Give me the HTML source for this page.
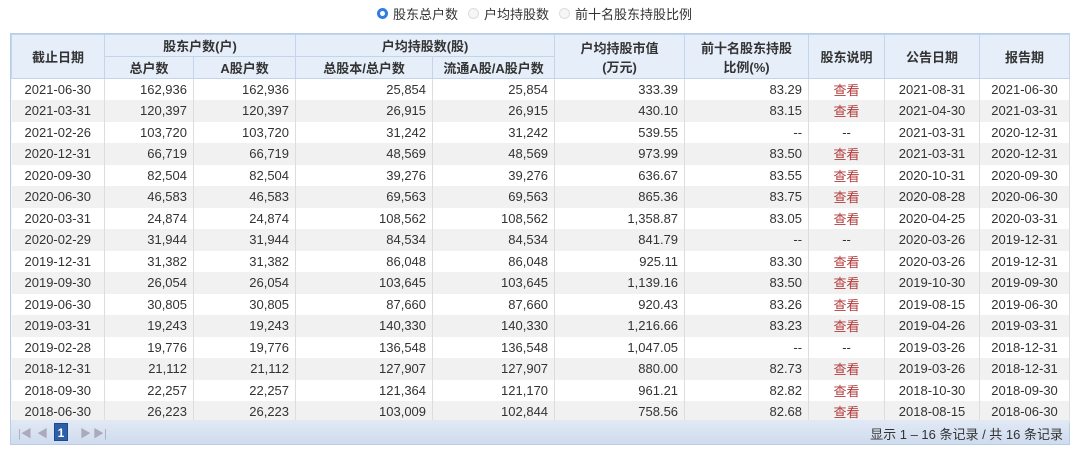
<!DOCTYPE html>
<html><head><meta charset="utf-8"><style>
body{margin:0;width:1080px;height:451px;background:#fff;font-family:"Liberation Sans","Noto Sans CJK SC",sans-serif;color:#333;overflow:hidden;position:relative}
.radios{position:absolute;top:4px;left:377px;font-size:13px;display:flex;gap:0;align-items:center;height:18px}
.r{display:inline-flex;align-items:center;margin-right:10px}
.c{width:11px;height:11px;border-radius:50%;border:1px solid #ddd;background:#f6f6f6;margin-right:5px;box-sizing:border-box}
.c.on{border:3px solid #2f7de1;background:#fff}
.wrap{position:absolute;left:10px;top:33px;width:1060px;height:412px;border:1px solid #b9cde8;box-sizing:border-box;background:#f4f7fb}
table{border-collapse:collapse;table-layout:fixed;width:1058px;font-size:13px}
th{background:#e6eef9;font-weight:bold;border:1px solid #c4d4ea;height:21px;padding:0;color:#333}
td{height:21.5px;padding:0 6px;text-align:right;border-right:1px solid #ddd;white-space:nowrap;box-sizing:border-box}
tr.o td{background:#fff}tr.e td{background:#f1f1f1}
td.ct{text-align:center}
a{color:#b23a3a;text-decoration:none}
.pg{position:absolute;left:0;right:0;bottom:0;height:24px;background:linear-gradient(#e1e9f5,#cfdcee);font-size:13px}
.pg .num{position:absolute;left:43px;top:3px;width:14px;height:18px;background:#2d5fa8;color:#fff;text-align:center;line-height:18px;font-weight:bold;font-size:12px;border:1px solid #1e4a8c;box-sizing:border-box}
.pg .ic{position:absolute;top:5px;color:#aab;font-size:11px}
.pg .t{position:absolute;right:6px;top:4px}
</style></head><body>
<div class="radios"><span class="r"><span class="c on"></span>股东总户数</span><span class="r"><span class="c"></span>户均持股数</span><span class="r"><span class="c"></span>前十名股东持股比例</span></div>
<div class="wrap">
<table>
<colgroup><col style="width:93px"><col style="width:89px"><col style="width:102px"><col style="width:137px"><col style="width:122px"><col style="width:130px"><col style="width:124px"><col style="width:76px"><col style="width:95px"><col style="width:90px"></colgroup>
<tr><th rowspan="2">截止日期</th><th colspan="2">股东户数(户)</th><th colspan="2">户均持股数(股)</th><th rowspan="2">户均持股市值<br>(万元)</th><th rowspan="2">前十名股东持股<br>比例(%)</th><th rowspan="2">股东说明</th><th rowspan="2">公告日期</th><th rowspan="2">报告期</th></tr>
<tr><th>总户数</th><th>A股户数</th><th>总股本/总户数</th><th>流通A股/A股户数</th></tr>
<tr class="o"><td class="ct">2021-06-30</td><td>162,936</td><td>162,936</td><td>25,854</td><td>25,854</td><td>333.39</td><td>83.29</td><td class="ct"><a>查看</a></td><td class="ct">2021-08-31</td><td class="ct">2021-06-30</td></tr>
<tr class="e"><td class="ct">2021-03-31</td><td>120,397</td><td>120,397</td><td>26,915</td><td>26,915</td><td>430.10</td><td>83.15</td><td class="ct"><a>查看</a></td><td class="ct">2021-04-30</td><td class="ct">2021-03-31</td></tr>
<tr class="o"><td class="ct">2021-02-26</td><td>103,720</td><td>103,720</td><td>31,242</td><td>31,242</td><td>539.55</td><td>--</td><td class="ct">--</td><td class="ct">2021-03-31</td><td class="ct">2020-12-31</td></tr>
<tr class="e"><td class="ct">2020-12-31</td><td>66,719</td><td>66,719</td><td>48,569</td><td>48,569</td><td>973.99</td><td>83.50</td><td class="ct"><a>查看</a></td><td class="ct">2021-03-31</td><td class="ct">2020-12-31</td></tr>
<tr class="o"><td class="ct">2020-09-30</td><td>82,504</td><td>82,504</td><td>39,276</td><td>39,276</td><td>636.67</td><td>83.55</td><td class="ct"><a>查看</a></td><td class="ct">2020-10-31</td><td class="ct">2020-09-30</td></tr>
<tr class="e"><td class="ct">2020-06-30</td><td>46,583</td><td>46,583</td><td>69,563</td><td>69,563</td><td>865.36</td><td>83.75</td><td class="ct"><a>查看</a></td><td class="ct">2020-08-28</td><td class="ct">2020-06-30</td></tr>
<tr class="o"><td class="ct">2020-03-31</td><td>24,874</td><td>24,874</td><td>108,562</td><td>108,562</td><td>1,358.87</td><td>83.05</td><td class="ct"><a>查看</a></td><td class="ct">2020-04-25</td><td class="ct">2020-03-31</td></tr>
<tr class="e"><td class="ct">2020-02-29</td><td>31,944</td><td>31,944</td><td>84,534</td><td>84,534</td><td>841.79</td><td>--</td><td class="ct">--</td><td class="ct">2020-03-26</td><td class="ct">2019-12-31</td></tr>
<tr class="o"><td class="ct">2019-12-31</td><td>31,382</td><td>31,382</td><td>86,048</td><td>86,048</td><td>925.11</td><td>83.30</td><td class="ct"><a>查看</a></td><td class="ct">2020-03-26</td><td class="ct">2019-12-31</td></tr>
<tr class="e"><td class="ct">2019-09-30</td><td>26,054</td><td>26,054</td><td>103,645</td><td>103,645</td><td>1,139.16</td><td>83.50</td><td class="ct"><a>查看</a></td><td class="ct">2019-10-30</td><td class="ct">2019-09-30</td></tr>
<tr class="o"><td class="ct">2019-06-30</td><td>30,805</td><td>30,805</td><td>87,660</td><td>87,660</td><td>920.43</td><td>83.26</td><td class="ct"><a>查看</a></td><td class="ct">2019-08-15</td><td class="ct">2019-06-30</td></tr>
<tr class="e"><td class="ct">2019-03-31</td><td>19,243</td><td>19,243</td><td>140,330</td><td>140,330</td><td>1,216.66</td><td>83.23</td><td class="ct"><a>查看</a></td><td class="ct">2019-04-26</td><td class="ct">2019-03-31</td></tr>
<tr class="o"><td class="ct">2019-02-28</td><td>19,776</td><td>19,776</td><td>136,548</td><td>136,548</td><td>1,047.05</td><td>--</td><td class="ct">--</td><td class="ct">2019-03-26</td><td class="ct">2018-12-31</td></tr>
<tr class="e"><td class="ct">2018-12-31</td><td>21,112</td><td>21,112</td><td>127,907</td><td>127,907</td><td>880.00</td><td>82.73</td><td class="ct"><a>查看</a></td><td class="ct">2019-03-26</td><td class="ct">2018-12-31</td></tr>
<tr class="o"><td class="ct">2018-09-30</td><td>22,257</td><td>22,257</td><td>121,364</td><td>121,170</td><td>961.21</td><td>82.82</td><td class="ct"><a>查看</a></td><td class="ct">2018-10-30</td><td class="ct">2018-09-30</td></tr>
<tr class="e"><td class="ct">2018-06-30</td><td>26,223</td><td>26,223</td><td>103,009</td><td>102,844</td><td>758.56</td><td>82.68</td><td class="ct"><a>查看</a></td><td class="ct">2018-08-15</td><td class="ct">2018-06-30</td></tr>
</table>
<div class="pg"><span class="ic" style="left:7px">|◀</span><span class="ic" style="left:26px">◀</span><span class="num">1</span><span class="ic" style="left:69px">▶</span><span class="ic" style="left:82px">▶|</span><span class="t">显示 1 – 16 条记录 / 共 16 条记录</span></div>
</div>
</body></html>
